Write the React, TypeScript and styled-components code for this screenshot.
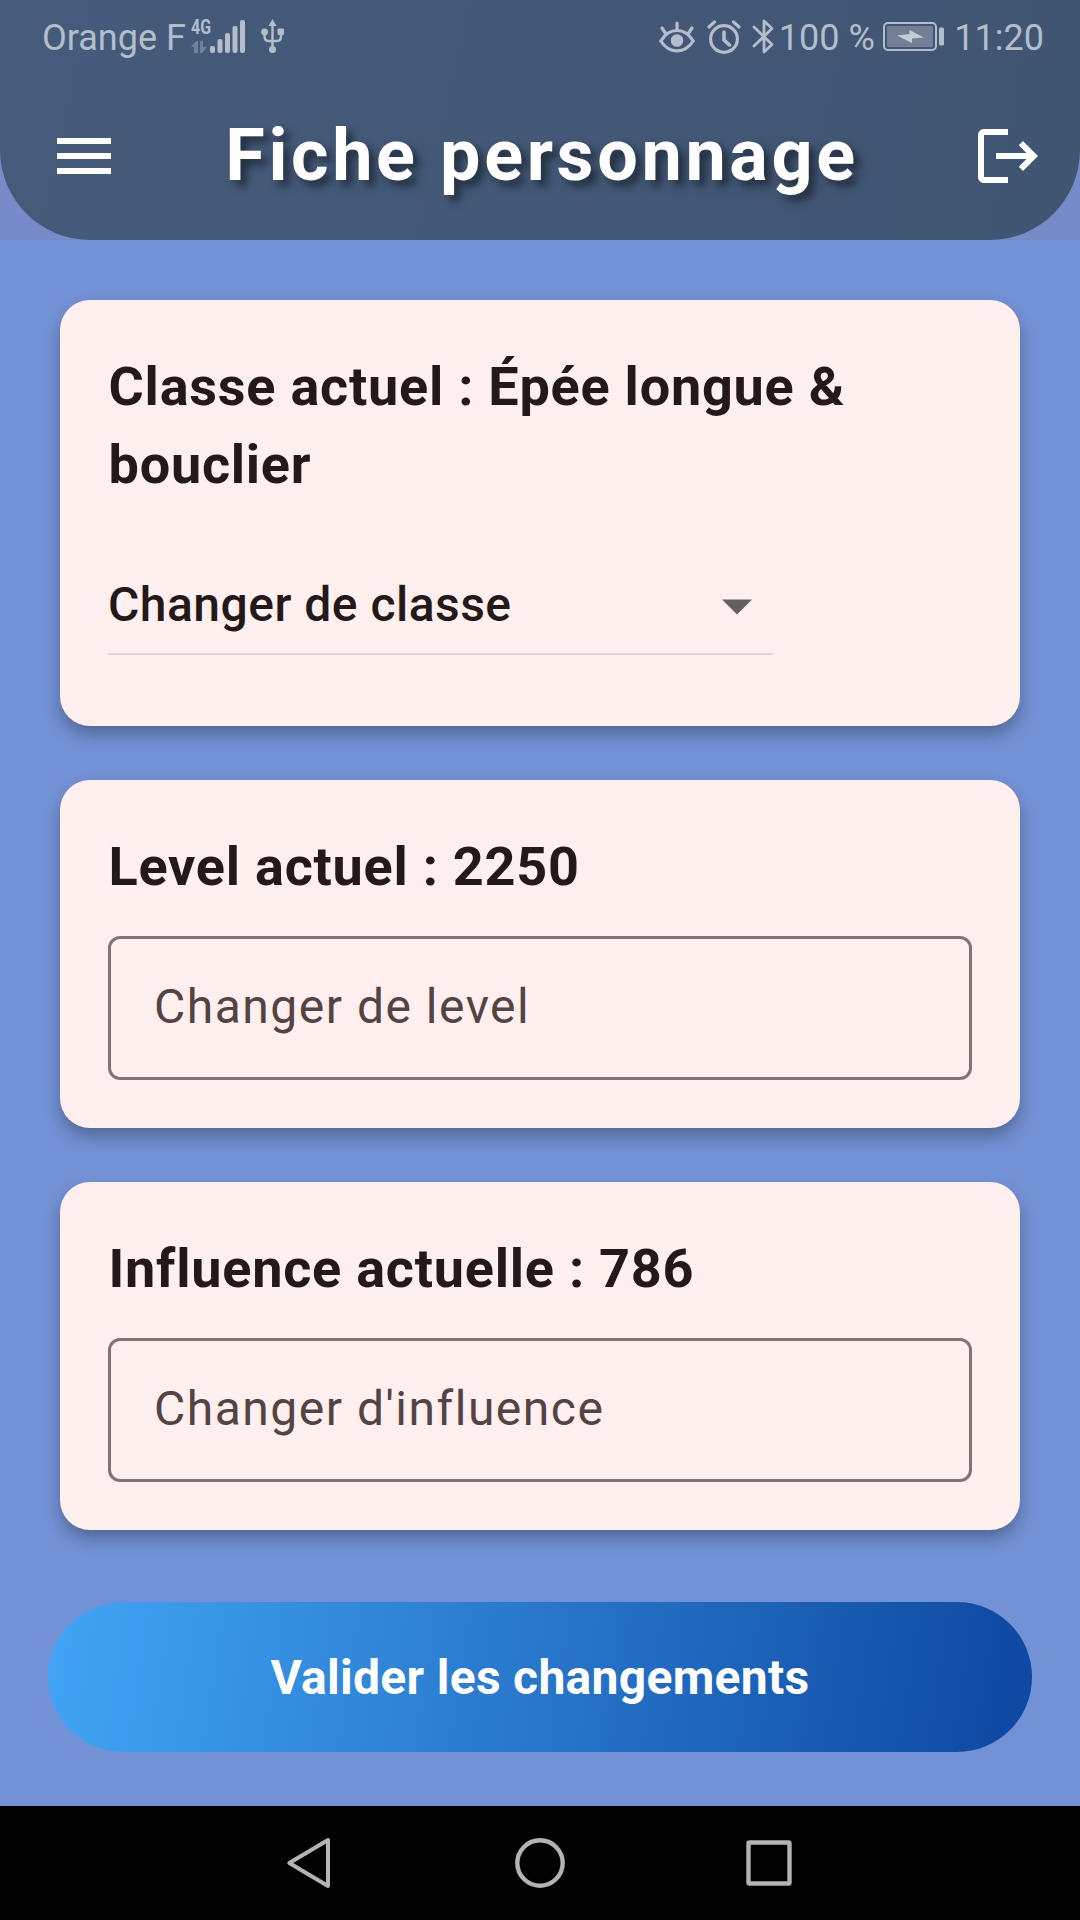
import React from "react";
import styled, { createGlobalStyle } from "styled-components";

const Global = createGlobalStyle`
  * { box-sizing: border-box; }
  body { margin: 0; background: #7392d5; }
`;

const Screen = styled.div`
  width: 1080px;
  height: 1920px;
  display: flex;
  flex-direction: column;
  background: #7392d5;
  font-family: Roboto, "Liberation Sans", sans-serif;
  overflow: hidden;
`;

const HeaderBack = styled.div`
  background: #778bc9;
`;

const Header = styled.header`
  height: 240px;
  border-radius: 0 0 90px 90px;
  background: linear-gradient(102.5deg, #455b7b, #405572);
  color: #fff;
`;

const StatusBar = styled.div`
  height: 72px;
  padding: 1px 36px 0 42px;
  display: flex;
  align-items: center;
  justify-content: space-between;
  color: #b4bdca;
`;

const StatusGroup = styled.div`
  display: flex;
  align-items: center;
`;

const StatusText = styled.span<{ $ml?: number }>`
  padding-top: 3px;
  font-size: 36px;
  line-height: 44px;
  margin-left: ${(p) => p.$ml ?? 0}px;
  white-space: nowrap;
`;

const Icon = styled.svg<{ $ml?: number }>`
  display: block;
  flex: none;
  margin-left: ${(p) => p.$ml ?? 0}px;
  overflow: visible;
`;

const Network = styled.div`
  display: flex;
  flex-direction: column;
  width: 20px;
  height: 34px;
  margin-left: 5px;
`;

const NetworkLabel = styled.span`
  font-size: 21px;
  line-height: 15px;
  height: 21px;
  font-weight: 700;
  transform: scaleX(0.76);
  transform-origin: left;
`;

const AppBar = styled.div`
  height: 168px;
  padding: 0 36px 0 48px;
  display: flex;
  align-items: center;
  justify-content: space-between;
`;

const IconButton = styled.button`
  width: 72px;
  height: 72px;
  padding: 0;
  border: 0;
  background: none;
  color: inherit;
`;

const Title = styled.h1`
  margin: 0 0 0 -8px;
  font-size: 72px;
  line-height: 84px;
  font-weight: 700;
  letter-spacing: 3.6px;
  text-shadow: 6px 6px 9px rgba(0, 0, 0, 0.5);
  white-space: nowrap;
`;

const Main = styled.main`
  flex: 1;
  padding: 60px 48px 54px;
  display: flex;
  flex-direction: column;
`;

const Cards = styled.div`
  padding: 0 12px;
  display: flex;
  flex-direction: column;
  gap: 54px;
`;

const Card = styled.section<{ $h: number }>`
  height: ${(p) => p.$h}px;
  padding: 48px;
  border-radius: 30px;
  background: #ffefee;
  box-shadow: 0 9px 17px -1px rgba(0, 0, 0, 0.31);
`;

const Heading = styled.h2`
  margin: 0;
  padding-left: 0.5px;
  font-size: 54px;
  line-height: 78px;
  font-weight: 700;
  letter-spacing: 0.76px;
  color: #231918;
`;

const Select = styled.div`
  width: 665px;
  height: 105px;
  margin-top: 46px;
  padding: 7px 0.5px 0 0;
  border-bottom: 2px solid #dfd6d5;
  display: flex;
  align-items: center;
  justify-content: space-between;
  color: #231918;
  font-size: 48px;
  font-weight: 500;
  letter-spacing: 0.48px;
`;

const SelectLabel = styled.span`
  padding-bottom: 2px;
`;

const Field = styled.input`
  display: block;
  width: 100%;
  height: 144px;
  margin-top: 30px;
  padding: 0 43px 4px;
  border: 3px solid #857372;
  border-radius: 12px;
  background: transparent;
  font: 400 48px Roboto, "Liberation Sans", sans-serif;
  letter-spacing: 1.5px;
  color: #534342;
  outline: none;
  &::placeholder { color: #534342; opacity: 1; }
`;

const Submit = styled.button`
  height: 150px;
  margin-top: 72px;
  border: 0;
  border-radius: 75px;
  background: linear-gradient(98.67deg, #42a5f5, #0d47a1);
  color: #fff;
  font: 700 48px Roboto, "Liberation Sans", sans-serif;
  letter-spacing: 0.3px;
`;

const NavBar = styled.nav`
  height: 114px;
  background: #000;
  display: flex;
  align-items: center;
  justify-content: center;
  gap: 180px;
`;

export default function App() {
  return (
    <Screen>
      <Global />
      <HeaderBack>
        <Header>
          <StatusBar>
            <StatusGroup>
              <StatusText>Orange F</StatusText>
              <Network>
                <NetworkLabel>4G</NetworkLabel>
                <Icon width="16" height="12" viewBox="0 0 16 12" fill="#6f819a">
                  <path d="M0 6 5 0h2v12H3V6zM9 0h3v6h4l-5 6H9z" />
                </Icon>
              </Network>
              <Icon width="35" height="34" viewBox="0 0 35 34" fill="currentColor" $ml={-1}>
                <rect x="0" y="26" width="5" height="7" rx="2" />
                <rect x="7.5" y="19" width="5" height="14" rx="2" />
                <rect x="15" y="13" width="5" height="20" rx="2" />
                <rect x="22.5" y="6" width="5" height="27" rx="2" />
                <rect x="30" y="0" width="5" height="33" rx="2" />
              </Icon>
              <Icon width="24" height="35" viewBox="0 0 24 35" fill="currentColor" $ml={16.5}>
                <path d="M11.500 4v27M3.500 14v3q0 5 4 5h8.500q4 0 4-5v-3" fill="none" stroke="currentColor" strokeWidth="2.4" />
                <path d="M11.500 0 15.500 7h-8z" />
                <circle cx="3.600" cy="13" r="3.4" />
                <rect x="16.500" y="9.5" width="6.5" height="6.5" rx="1" />
                <circle cx="11.500" cy="30.5" r="3.5" />
              </Icon>
            </StatusGroup>
            <StatusGroup>
              <Icon width="36" height="32" viewBox="0 0 36 32" fill="none" stroke="currentColor" strokeWidth="3.2" strokeLinecap="round">
                <path d="M1.8 20Q8 9.5 18 9.5T34.2 20Q28 29.8 18 29.8T1.8 20zM18 2v7M3 7l4 6M33 7l-4 6" />
                <circle cx="18" cy="19.5" r="6.3" fill="currentColor" stroke="none" />
              </Icon>
              <Icon width="34" height="34" viewBox="0 0 34 34" fill="none" stroke="currentColor" strokeWidth="3.2" $ml={12}>
                <circle cx="17" cy="19" r="13.4" />
                <path d="M17 12v8l5.5 5" strokeLinecap="round" strokeWidth="3.6" />
                <path d="M2 7 7.5 2M32 7l-5.500-5" strokeLinecap="round" />
              </Icon>
              <Icon width="22" height="35" viewBox="0 0 22 35" fill="none" stroke="currentColor" strokeWidth="2.8" strokeLinecap="round" $ml={11}>
                <path d="M2 8 20 25.500 12 33V2l8 7.500L2 27" strokeLinejoin="round" />
              </Icon>
              <StatusText $ml={5}>100 %</StatusText>
              <Icon width="62" height="29" viewBox="0 0 62 29" fill="none" $ml={8.5}>
                <rect x="1" y="1" width="52" height="27" rx="4" stroke="currentColor" strokeWidth="2" />
                <rect x="4" y="4" width="46" height="21" rx="1" fill="#717f97" />
                <path d="M14 13.500 26.500 12V8l14.500 7.500-12 1v4.500z" fill="#c6cdd7" />
                <rect x="56" y="5.500" width="5" height="18" rx="1.500" fill="currentColor" />
              </Icon>
              <StatusText $ml={9}>11:20</StatusText>
            </StatusGroup>
          </StatusBar>
          <AppBar>
            <IconButton aria-label="Menu">
              <Icon width="72" height="72" viewBox="0 0 24 24" fill="currentColor">
                <path d="M3 18h18v-2H3v2zm0-5h18v-2H3v2zm0-7v2h18V6H3z" />
              </Icon>
            </IconButton>
            <Title>Fiche personnage</Title>
            <IconButton aria-label="Déconnexion">
              <Icon width="72" height="72" viewBox="0 0 24 24" fill="currentColor">
                <path d="m17 7-1.410 1.410L18.170 11H8v2h10.170l-2.580 2.580L17 17l5-5zM4 5h8V3H4c-1.100 0-2 .9-2 2v14c0 1.100.9 2 2 2h8v-2H4z" />
              </Icon>
            </IconButton>
          </AppBar>
        </Header>
      </HeaderBack>
      <Main>
        <Cards>
          <Card $h={426}>
            <Heading>Classe actuel : Épée longue &amp; bouclier</Heading>
            <Select>
              <SelectLabel>Changer de classe</SelectLabel>
              <Icon width="72" height="72" viewBox="0 0 24 24" fill="#616161">
                <path d="m7 10.150 5 5 5-5z" />
              </Icon>
            </Select>
          </Card>
          <Card $h={348}>
            <Heading>Level actuel : 2250</Heading>
            <Field placeholder="Changer de level" />
          </Card>
          <Card $h={348}>
            <Heading>Influence actuelle : 786</Heading>
            <Field placeholder="Changer d'influence" />
          </Card>
        </Cards>
        <Submit>Valider les changements</Submit>
      </Main>
      <NavBar>
        <Icon width="50" height="50" viewBox="0 0 50 50" fill="none" stroke="#b3b3b3" strokeWidth="4">
          <path d="M43 2v46L4.300 25z" strokeLinejoin="round" />
        </Icon>
        <Icon width="50" height="50" viewBox="0 0 50 50" fill="none" stroke="#b3b3b3" strokeWidth="4.400">
          <circle cx="25" cy="25" r="22.700" />
        </Icon>
        <Icon width="50" height="50" viewBox="0 0 50 50" fill="none" stroke="#b3b3b3" strokeWidth="4.400">
          <rect x="3.500" y="4.500" width="41" height="41" rx="1" />
        </Icon>
      </NavBar>
    </Screen>
  );
}
